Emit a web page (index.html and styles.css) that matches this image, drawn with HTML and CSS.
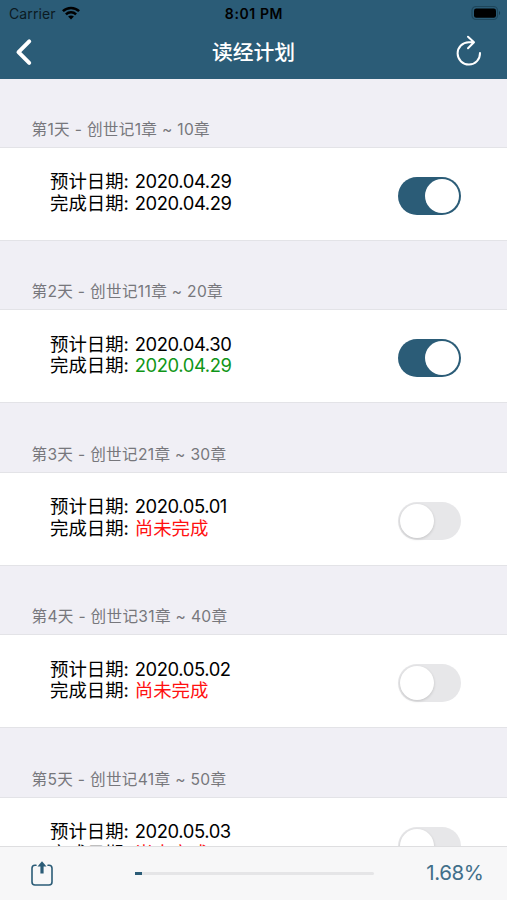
FILE: index.html
```
<!DOCTYPE html>
<html lang="zh-CN">
<head>
<meta charset="utf-8">
<title>读经计划</title>
<link rel="stylesheet" href="styles.css">
</head>
<body>
<div class="app">
  <header class="top">
    <div class="status">
      <div class="carrier"><span>Carrier</span>
        <svg width="18" height="14" viewBox="0 0 18 14" fill="none" stroke="#000" stroke-width="2.5"><path d="M.9 5.2C5.4.8 12.6.8 17.1 5.2M3.9 8.3c2.9-2.8 7.3-2.8 10.2 0"/><path d="M9 13.4 6.100 10.600c1.600-1.500 4.200-1.500 5.800 0z" fill="#000" stroke="none"/></svg>
      </div>
      <div class="clock">8:01 PM</div>
      <svg class="battery" width="30" height="16" viewBox="0 0 30 16"><rect x="1" y="1.5" width="25.5" height="13" rx="4" fill="none" stroke="#1e465b" stroke-width="1.2"/><rect x="3" y="3.5" width="22" height="9.3" rx="2.2"/><path d="M28 6v4c1.500-.8 1.500-3.200 0-4z" fill="#173b4d"/></svg>
    </div>
    <nav class="nav">
      <svg class="back" width="18" height="28" viewBox="0 0 18 28" fill="none" stroke="#fff" stroke-width="4" stroke-linecap="round" stroke-linejoin="round"><path d="M14.200 3.400 3.500 14.200l10.700 10.600"/></svg>
      <h1>读经计划</h1>
      <svg class="reload" width="26" height="31" viewBox="0 0 26 31" fill="none" stroke="#fff" stroke-width="2" stroke-linecap="round" stroke-linejoin="round"><path d="M24 18A11.200 11.200 0 1 1 12.800 7.200h4.700M12 1.700l6 5.500-6 6"/></svg>
    </nav>
  </header>
  <main class="list">
    <section><h2>第1天 - 创世记1章 ~ 10章</h2><div class="row"><div class="dates"><p>预计日期: <span class="num">2020.04.29</span></p><p>完成日期: <span class="num">2020.04.29</span></p></div><i class="switch on"></i></div></section>
    <section><h2>第2天 - 创世记11章 ~ 20章</h2><div class="row"><div class="dates"><p>预计日期: <span class="num">2020.04.30</span></p><p>完成日期: <span class="num early">2020.04.29</span></p></div><i class="switch on"></i></div></section>
    <section><h2>第3天 - 创世记21章 ~ 30章</h2><div class="row"><div class="dates"><p>预计日期: <span class="num">2020.05.01</span></p><p>完成日期: <span class="todo">尚未完成</span></p></div><i class="switch"></i></div></section>
    <section><h2>第4天 - 创世记31章 ~ 40章</h2><div class="row"><div class="dates"><p>预计日期: <span class="num">2020.05.02</span></p><p>完成日期: <span class="todo">尚未完成</span></p></div><i class="switch"></i></div></section>
    <section><h2>第5天 - 创世记41章 ~ 50章</h2><div class="row"><div class="dates"><p>预计日期: <span class="num">2020.05.03</span></p><p>完成日期: <span class="todo">尚未完成</span></p></div><i class="switch"></i></div></section>
  </main>
  <footer class="bar">
    <svg class="share" width="22" height="26" viewBox="0 0 22 26" fill="none" stroke="#2b5c77" stroke-width="1.600" stroke-linecap="round"><path d="M5 4.200H4A3 3 0 0 0 1 7.200V21a3 3 0 0 0 3 3h14a3 3 0 0 0 3-3V7.200a3 3 0 0 0-3-3h-1"/><path d="M11 4v8.500" stroke-width="3.200" stroke-linecap="butt"/><path d="M11 .300 15.500 5.500h-9z" fill="#2b5c77" stroke="none"/></svg>
    <div class="track"><div class="fill"></div></div>
    <div class="percent">1.68%</div>
  </footer>
</div>
</body>
</html>
```
FILE: styles.css
```
* { box-sizing: border-box; margin: 0; padding: 0; }
body { font-family: Inter, "Noto Sans CJK SC", sans-serif; background: #f0eff5; color: #000; }
.app { height: 900px; display: flex; flex-direction: column; overflow: hidden; }
.top { flex: none; height: 79.2px; background: #2b5c77; }
.status { height: 27px; display: grid; grid-template-columns: 1fr auto 1fr; align-items: center; padding: 0 6px 0 9px; font-size: 14px; line-height: 27px; }
.carrier { display: flex; align-items: center; gap: 6px; letter-spacing: .12px; color: #0b1a22; }
.carrier svg { margin-top: -2px; }
.clock { font-weight: 600; font-size: 14px; letter-spacing: .6px; margin-left: -2px; }
.battery { justify-self: end; margin-top: -1px; }
.nav { height: 52px; display: grid; grid-template-columns: 1fr auto 1fr; align-items: center; padding: 0 25px 0 15px; }
.back { margin-top: -2px; }
h1 { font-size: 20.8px; font-weight: 500; line-height: 30px; color: #fff; padding-left: 10px; }
.reload { justify-self: end; margin-top: -5px; }
.list { flex: 1; min-height: 0; overflow: hidden; }
section { height: 162.5px; display: flex; flex-direction: column; }
h2 { flex: none; height: 67.8px; padding: 38.400px 0 0 31.500px; font-size: 15.6px; line-height: 24px; font-weight: 400; letter-spacing: .32px; color: #77777c; white-space: nowrap; }
.row { flex: none; height: 94px; background: #fff; border-top: 1px solid #e3e3e7; border-bottom: 1px solid #e3e3e7; display: flex; justify-content: space-between; align-items: flex-start; padding: 21.300px 46px 0 50px; }
.dates { font-size: 18.4px; }
.dates p { height: 21.4px; line-height: 24px; white-space: nowrap; }
.num { letter-spacing: -.4px; margin-left: .7px; }
.early { color: #109618; }
.todo { color: #ff1010; margin-left: .7px; }
.switch { width: 63px; height: 38px; margin-top: 7.700px; border-radius: 19px; background: #e7e7e9; padding: 2px; display: flex; }
.switch::after { content: ""; width: 34px; height: 34px; border-radius: 50%; background: #fff; box-shadow: 0 1px 3px rgba(0,0,0,.16); }
.switch.on { background: #2b5c77; justify-content: flex-end; }
.switch.on::after { box-shadow: none; }
.bar { flex: none; height: 54.500px; background: #f7f7f8; border-top: 1px solid #dedee0; display: flex; align-items: center; padding: 0 24px 0 31px; }
.share { margin-top: 1px; }
.track { width: 239px; height: 3px; margin-left: 82px; border-radius: 2px; background: #e5e5e7; }
.fill { width: 7px; height: 3px; background: #2b5c77; }
.percent { margin-left: auto; font-size: 20.5px; line-height: 30px; letter-spacing: -.4px; margin-right: -.5px; color: #416f8a; }
```
